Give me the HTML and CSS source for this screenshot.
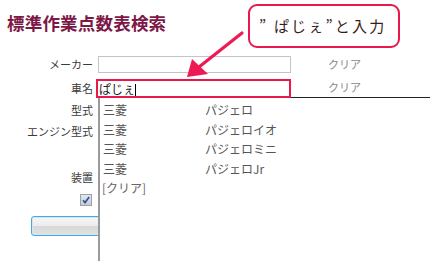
FILE: index.html
```html
<!DOCTYPE html>
<html lang="ja">
<head>
  <meta charset="UTF-8" />
  <title>標準作業点数表検索</title>
  <link rel="stylesheet" href="styles.css">
</head>
<body>
  <div class="page">
    <h1 class="title">標準作業点数表検索</h1>

    <form class="search-form">
      <div class="row row-maker">
        <label class="label">メーカー</label>
        <input class="field" type="text" />
        <span class="clear">クリア</span>
      </div>
      <div class="row row-car">
        <label class="label">車名</label>
        <div class="field field-active">ぱじぇ<span class="caret"></span></div>
        <span class="clear">クリア</span>
      </div>
      <div class="row row-model">
        <label class="label">型式</label>
      </div>
      <div class="row row-engine">
        <label class="label">エンジン型式</label>
      </div>
      <div class="row row-blank"></div>
      <div class="row row-device">
        <label class="label">装置</label>
      </div>
      <div class="row row-check">
        <span class="check">
          <svg width="12" height="12" viewBox="0 0 12 12">
            <defs>
              <linearGradient id="cb" x1="0" y1="0" x2="0" y2="1">
                <stop offset="0" stop-color="#e4e8ec"/>
                <stop offset="1" stop-color="#c4ccd4"/>
              </linearGradient>
            </defs>
            <rect x="0.5" y="0.5" width="11" height="11" fill="url(#cb)" stroke="#9aa3ad"/>
            <path d="M3 6.2 L5 8.6 L9.2 3" fill="none" stroke="#2f4f9c" stroke-width="1.6"/>
          </svg>
        </span>
      </div>
      <div class="row row-button">
        <button type="button" class="search-btn"></button>
      </div>
    </form>

    <div class="suggest">
      <div class="suggest-item"><span class="maker">三菱</span><span>パジェロ</span></div>
      <div class="suggest-item"><span class="maker">三菱</span><span>パジェロイオ</span></div>
      <div class="suggest-item"><span class="maker">三菱</span><span>パジェロミニ</span></div>
      <div class="suggest-item"><span class="maker">三菱</span><span>パジェロJr</span></div>
      <div class="suggest-item suggest-clear">[クリア]</div>
    </div>

    <div class="callout">” ぱじぇ”と入力</div>
    <svg class="arrow" width="430" height="261" viewBox="0 0 430 261">
      <line x1="242" y1="33" x2="199" y2="67" stroke="#ee1a55" stroke-width="3.2" stroke-linecap="round"/>
      <polygon points="187,77 192,59 208,74" fill="#ee1a55"/>
    </svg>
  </div>
</body>
</html>
```

FILE: styles.css
```css
body {
  margin: 0;
  background: #fff;
  font-family: "Noto Sans CJK JP", "Liberation Sans", sans-serif;
  color: #333;
}
.page {
  position: relative;
  width: 430px;
  height: 261px;
  overflow: hidden;
}
.title {
  margin: 0;
  padding: 12px 0 0 7px;
  height: 40px;
  box-sizing: border-box;
  font-size: 17.5px;
  font-weight: bold;
  line-height: 22px;
  color: #7d1846;
  letter-spacing: 0.2px;
}
.search-form {
  margin-top: 12px;
}
.row {
  display: flex;
  align-items: center;
}
.label {
  width: 93px;
  text-align: right;
  font-size: 11px;
  color: #3a3a3a;
  flex: none;
}
.row-maker { height: 24px; }
.row-car { height: 24px; }
.row-model { height: 19px; }
.row-engine { height: 24px; }
.row-blank { height: 22px; }
.row-device { height: 23px; }
.row-check { height: 23px; }
.row-button { height: 30px; }

.field {
  box-sizing: border-box;
  width: 193px;
  height: 17px;
  margin-left: 5px;
  border: 1px solid #c4c4c4;
  background: #fff;
  padding: 0;
}
.field-active {
  position: relative;
  z-index: 2;
  width: 195px;
  height: 19px;
  margin-left: 3px;
  border: 2px solid #e8174c;
  font-size: 12px;
  line-height: 15px;
  color: #222;
  padding-left: 1px;
}
.caret {
  display: inline-block;
  width: 1px;
  height: 12px;
  background: #000;
  vertical-align: -2px;
}
.clear {
  margin-left: 37px;
  font-size: 11px;
  color: #888;
}
.row-car .clear {
  margin-top: -2px;
}
.check {
  width: 93px;
  display: flex;
  justify-content: flex-end;
}
.check svg {
  margin-right: 1px;
}
.search-btn {
  margin-left: 31px;
  width: 110px;
  height: 20px;
  border: 1px solid #4aa9dc;
  border-radius: 3px;
  background: linear-gradient(#f6f6f6, #ececec 50%, #d8d8d8 51%, #e2e2e2);
  box-shadow: inset 0 0 0 1px #cfe8f5;
}

.suggest {
  position: absolute;
  left: 98px;
  top: 97px;
  right: 0;
  bottom: 0;
  z-index: 1;
  background: #fff;
  border-left: 2px solid #9a9a9a;
  border-top: 1px solid #222;
  padding: 2px 0 0 3px;
  font-size: 12px;
  color: #555;
}
.suggest-item {
  height: 19.5px;
  line-height: 19.5px;
  display: flex;
}
.maker {
  width: 102px;
  flex: none;
}
.suggest-clear {
  color: #666;
  margin-left: -1px;
}

.callout {
  position: absolute;
  left: 248px;
  top: 4px;
  width: 152px;
  height: 44px;
  box-sizing: border-box;
  z-index: 3;
  background: #fff;
  border: 2px solid #e8174c;
  border-radius: 9px;
  padding-left: 9px;
  font-size: 15px;
  line-height: 40px;
  color: #3a1c1c;
  letter-spacing: 2.2px;
  white-space: nowrap;
}
.arrow {
  position: absolute;
  left: 0;
  top: 0;
  z-index: 4;
  pointer-events: none;
}
```
